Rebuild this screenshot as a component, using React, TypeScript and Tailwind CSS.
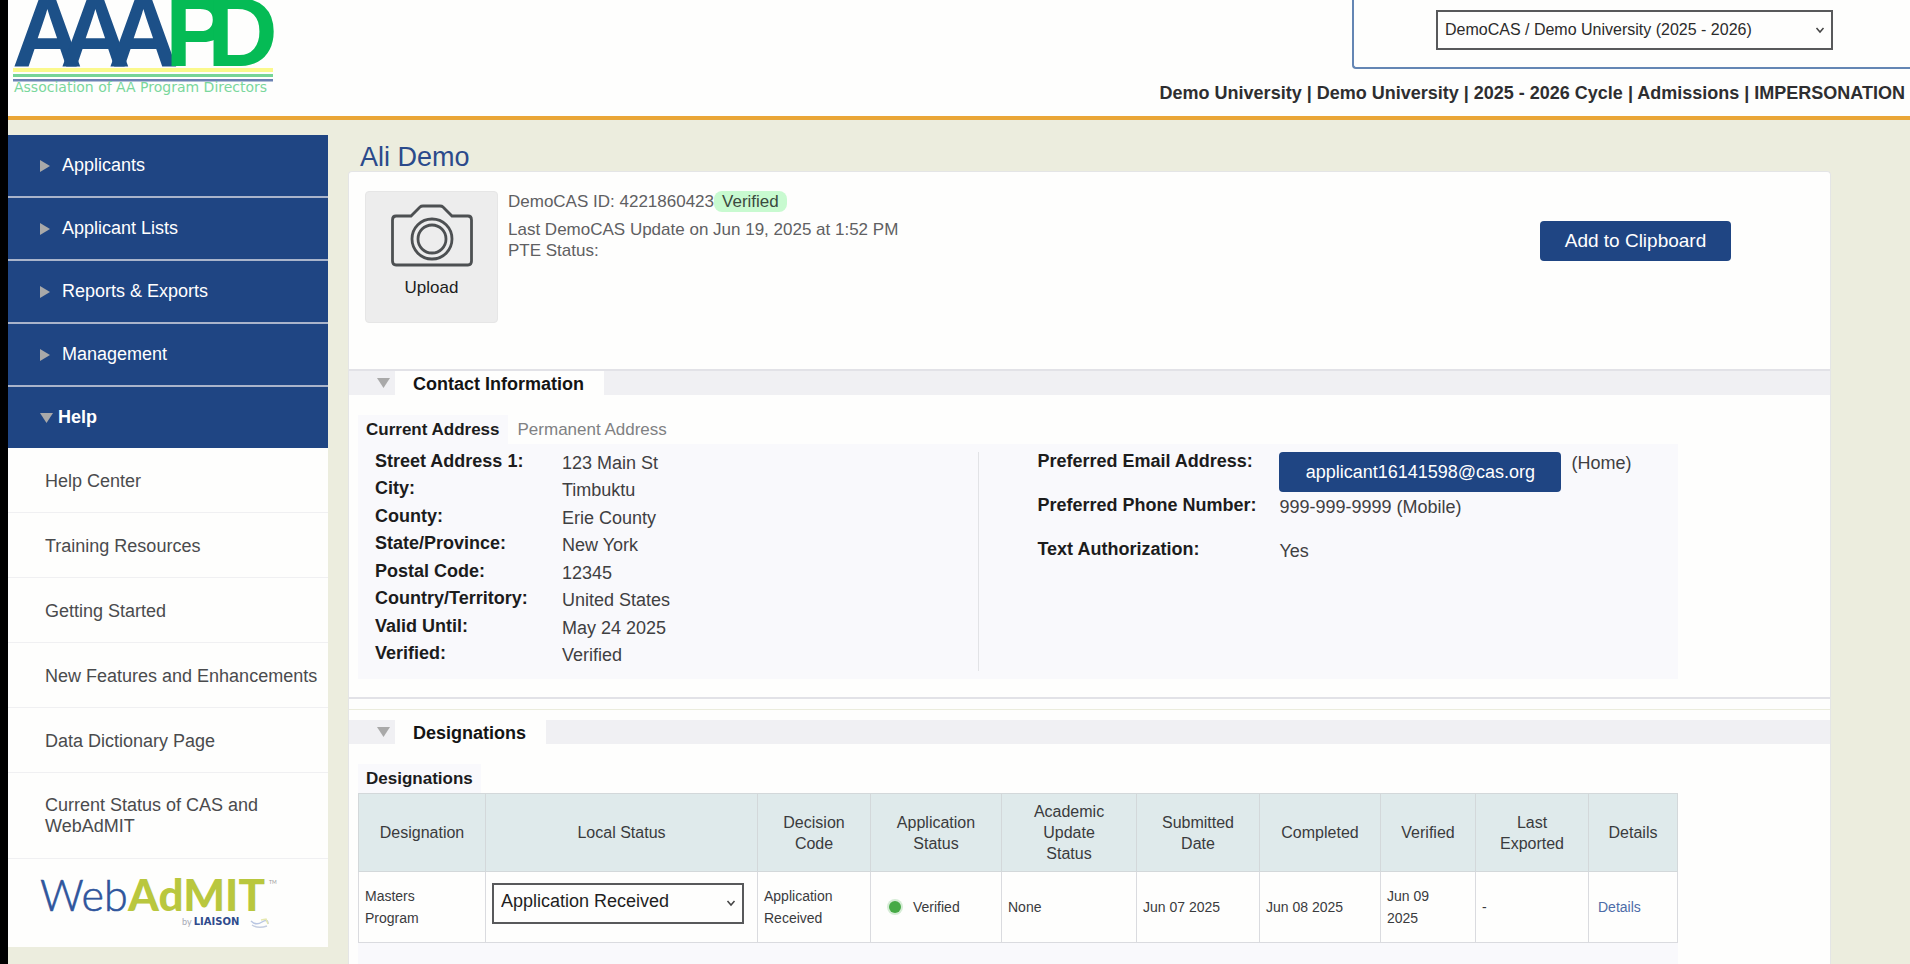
import { ReactNode } from "react";

const menu = ["Applicants", "Applicant Lists", "Reports & Exports", "Management"];

const helpLinks = [
  "Help Center",
  "Training Resources",
  "Getting Started",
  "New Features and Enhancements",
  "Data Dictionary Page",
];

const address = [
  ["Street Address 1:", "123 Main St"],
  ["City:", "Timbuktu"],
  ["County:", "Erie County"],
  ["State/Province:", "New York"],
  ["Postal Code:", "12345"],
  ["Country/Territory:", "United States"],
  ["Valid Until:", "May 24 2025"],
  ["Verified:", "Verified"],
];

const columns = [
  { name: "Designation", width: "w-[127px]" },
  { name: "Local Status", width: "w-[272px]" },
  { name: "Decision Code", width: "w-[113px]" },
  { name: "Application Status", width: "w-[131px]" },
  { name: "Academic Update Status", width: "w-[135px]" },
  { name: "Submitted Date", width: "w-[123px]" },
  { name: "Completed", width: "w-[121px]" },
  { name: "Verified", width: "w-[95px]" },
  { name: "Last Exported", width: "w-[113px]" },
  { name: "Details", width: "w-[89px]" },
];

function RightArrow() {
  return (
    <svg className="w-[10px] h-3" viewBox="0 0 10 12" fill="#a9a9a9">
      <polygon points="0,0 10,6 0,12" />
    </svg>
  );
}

function DownArrow() {
  return (
    <svg className="w-[13px] h-[10px]" viewBox="0 0 13 10" fill="#a9a9a9">
      <polygon points="0,0 13,0 6.5,10" />
    </svg>
  );
}

function Chevron() {
  return (
    <svg
      className="absolute right-2 top-1/2 w-[10px] h-2 -mt-1 pointer-events-none"
      viewBox="0 0 10 8"
      fill="none"
      stroke="#444"
      strokeWidth="1.5"
    >
      <path d="M1.5 2 L5 6 L8.5 2" />
    </svg>
  );
}

function AaapdLogo() {
  return (
    <svg className="w-[270px] h-[100px] shrink-0" viewBox="8 0 270 100" role="img" aria-label="AAAPD">
      <text y="66" fontFamily="Liberation Sans, sans-serif" fontWeight="700" fontSize="98">
        <tspan x="12 60 108" fill="#1c5088">AAA</tspan>
        <tspan x="165 207" fill="#05bb55">PD</tspan>
      </text>
      <rect x="13" y="68" width="260" height="4" fill="#fbf98c" />
      <rect x="13" y="74" width="260" height="3" fill="#76d596" />
      <rect x="13" y="79" width="260" height="2.5" fill="#6b82b3" />
      <text x="14" y="92" fontFamily="DejaVu Sans, sans-serif" fontSize="14" fill="#7ad79c">
        Association of AA Program Directors
      </text>
    </svg>
  );
}

function WebAdmitLogo() {
  return (
    <svg className="w-[240px] h-[60px]" viewBox="38 872 240 60" role="img" aria-label="WebAdMIT by Liaison">
      <text y="911" fontFamily="Lato, sans-serif">
        <tspan x="40" fontSize="43" fontWeight="300" fill="#2f559c" stroke="#2f559c" strokeWidth="0.6">Web</tspan>
        <tspan x="128" fontSize="44" fontWeight="900" fill="#b9c73e">AdMIT</tspan>
      </text>
      <text x="269" y="884" fontFamily="Lato, sans-serif" fontSize="5" fill="#999">TM</text>
      <text x="182" y="925" fontSize="9">
        <tspan fontFamily="Lato, sans-serif" fill="#a5a8b5">by </tspan>
        <tspan fontFamily="DejaVu Sans, sans-serif" fontSize="10" fontWeight="700" fill="#2f4a8c">LIAISON</tspan>
      </text>
      <path d="M251 921 Q256 926 262 922 T268 924" fill="none" stroke="#b9c6e2" strokeWidth="1.5" />
      <path d="M252 925 Q258 929 267 926" fill="none" stroke="#c4cde0" strokeWidth="1.5" />
      <path d="M261 920 L266 919 L268 924" fill="none" stroke="#e6e8b0" strokeWidth="1.5" />
    </svg>
  );
}

function Camera() {
  return (
    <svg className="w-[82px] h-[63px]" viewBox="0 0 82 63" fill="none" stroke="#4d5052" strokeWidth="2.8">
      <path d="M5 12 H20 L29 3 Q30 2 32 2 H49 Q51 2 52 3 L61 12 H77 Q80.500 12 80.500 16 V57 Q80.500 61 77 61 H5 Q1.500 61 1.500 57 V16 Q1.500 12 5 12 Z" />
      <circle cx="41" cy="35" r="20" />
      <circle cx="41" cy="35" r="14" />
    </svg>
  );
}

function SectionTitle(props: { children: ReactNode }) {
  return (
    <div className="flex h-6 bg-[#f0f0f3]">
      <button aria-label="Collapse section" className="w-[46px] pl-7 flex items-center">
        <DownArrow />
      </button>
      <h2 className="bg-[#fefefd] pl-[18px] pr-5 text-[18px] leading-[26px] font-bold text-[#141414]">
        {props.children}
      </h2>
    </div>
  );
}

function Header() {
  return (
    <header className="h-[120px] bg-[#fefefd] border-b-4 border-[#eaa636] flex justify-between">
      <AaapdLogo />
      <div className="flex flex-col items-end">
        <div className="w-[558px] h-[69px] pt-[10px] pl-[82px] border-l-2 border-b-2 border-[#6486b4] rounded-bl">
          <div className="relative w-[397px]">
            <select
              aria-label="Cycle"
              className="appearance-none w-full h-10 pl-[7px] border-2 border-[#58595b] bg-[#fefefd] text-[16px] text-[#2b2b2b]"
            >
              <option>DemoCAS / Demo University (2025 - 2026)</option>
            </select>
            <Chevron />
          </div>
        </div>
        <p className="pt-[11px] pr-[5px] text-[18px] leading-[26px] font-bold text-[#2e2e30] whitespace-nowrap">
          Demo University | Demo University | 2025 - 2026 Cycle | Admissions | IMPERSONATION
        </p>
      </div>
    </header>
  );
}

function SideNav() {
  return (
    <nav className="w-80 shrink-0 mt-[15px] mb-4 self-start bg-[#fefefd]">
      {menu.map((item) => (
        <button
          key={item}
          className="w-full h-[63px] pl-8 flex items-center gap-3 bg-[#1f4583] border-b-2 border-[#a9b4cb] text-[18px] text-white"
        >
          <RightArrow />
          {item}
        </button>
      ))}
      <button className="w-full h-[61px] pl-8 flex items-center gap-[5px] bg-[#1f4583] text-[18px] font-bold text-white">
        <DownArrow />
        Help
      </button>
      {helpLinks.map((item) => (
        <a
          key={item}
          href="#"
          className="h-[65px] pt-0.5 pl-[37px] flex items-center border-b border-[#f0f0f2] text-[18px] text-[#4a4b4d] whitespace-nowrap"
        >
          {item}
        </a>
      ))}
      <a
        href="#"
        className="h-[86px] pl-[37px] pr-16 flex items-center border-b border-[#f0f0f2] text-[18px] leading-[21px] text-[#4a4b4d]"
      >
        Current Status of CAS and WebAdMIT
      </a>
      <div className="h-[88px] pl-[30px] pt-[13px]">
        <WebAdmitLogo />
      </div>
    </nav>
  );
}

function Profile() {
  return (
    <section className="h-[197px] pt-[19px] pl-4 flex items-start">
      <button className="w-[133px] h-[132px] pt-3 flex flex-col items-center bg-[#ededed] border border-[#e6e6e6] rounded-sm text-[17px] text-[#1c1c1c]">
        <Camera />
        <span className="pt-2">Upload</span>
      </button>
      <div className="pl-[10px] text-[17px] leading-[21px] text-[#5f6062]">
        <p className="pb-[7px]">
          DemoCAS ID: 4221860423
          <span className="inline-block px-2 rounded-lg bg-[#c8fad0] text-[#3b4a40]">Verified</span>
        </p>
        <p>Last DemoCAS Update on Jun 19, 2025 at 1:52 PM</p>
        <p>PTE Status:</p>
      </div>
      <button className="ml-auto mr-[99px] mt-[30px] w-[191px] h-10 rounded-sm bg-[#1f4583] text-[19px] text-white">
        Add to Clipboard
      </button>
    </section>
  );
}

function ContactInfo() {
  return (
    <section>
      <SectionTitle>Contact Information</SectionTitle>
      <div className="pt-5 pb-[18px] pl-[9px] pr-[152px]">
        <div className="flex h-[29px] text-[17px]">
          <button className="px-2 bg-[#f9f9fc] font-bold text-[#1c1c1c]">Current Address</button>
          <button className="px-[10px] text-[#808183]">Permanent Address</button>
        </div>
        <div className="flex h-[235px] bg-[#f9f9fc] text-[18px] leading-[27px]">
          <dl className="w-[47%] pt-1 pb-3 pl-[17px] flex flex-col justify-between">
            {address.map(([label, value]) => (
              <div key={label} className="flex h-[27px]">
                <dt className="w-[187px] font-bold text-[#1c1c1c]">{label}</dt>
                <dd className="leading-[31px] text-[#3f4042]">{value}</dd>
              </div>
            ))}
          </dl>
          <div className="w-px my-2 bg-[#e2e3e6]" />
          <dl className="flex-1 pt-1 pl-[58px]">
            <div className="flex h-11">
              <dt className="w-[242px] font-bold text-[#1c1c1c]">Preferred Email Address:</dt>
              <dd className="flex items-start leading-[31px] text-[#3f4042]">
                <a
                  href="#"
                  className="mt-1 mr-[10px] w-[282px] h-10 leading-10 text-center rounded-sm bg-[#1f4583] text-white"
                >
                  applicant16141598@cas.org
                </a>
                (Home)
              </dd>
            </div>
            <div className="flex h-11">
              <dt className="w-[242px] font-bold text-[#1c1c1c]">Preferred Phone Number:</dt>
              <dd className="leading-[31px] text-[#3f4042]">999-999-9999 (Mobile)</dd>
            </div>
            <div className="flex h-11">
              <dt className="w-[242px] font-bold text-[#1c1c1c]">Text Authorization:</dt>
              <dd className="leading-[31px] text-[#3f4042]">Yes</dd>
            </div>
          </dl>
        </div>
      </div>
    </section>
  );
}

function Cell(props: { children: ReactNode }) {
  return <td className="border border-[#dadbdf] px-[6px]">{props.children}</td>;
}

function Designations() {
  return (
    <section className="flex-1 flex flex-col">
      <SectionTitle>Designations</SectionTitle>
      <div className="flex-1 flex flex-col pt-5 pl-[9px] pr-[152px]">
        <h3 className="self-start h-[29px] px-2 leading-[29px] bg-[#f9f9fc] text-[17px] font-bold text-[#1c1c1c]">
          Designations
        </h3>
        <table className="w-full table-fixed border-collapse text-[#3a3b3d]">
          <thead>
            <tr className="h-[78px] bg-[#dfeaeb] text-[16px] leading-[21px]">
              {columns.map((col) => (
                <th key={col.name} className={`${col.width} border border-[#d3d8da] px-[18px] font-normal`}>
                  {col.name}
                </th>
              ))}
            </tr>
          </thead>
          <tbody>
            <tr className="h-[71px] bg-[#fefefd] text-[14px] leading-[22px]">
              <Cell>
                <span className="block w-16">Masters Program</span>
              </Cell>
              <Cell>
                <div className="relative mr-[7px] mb-2">
                  <select
                    aria-label="Local status"
                    className="appearance-none w-full h-[41px] pl-[7px] pb-1 border-2 border-[#58595b] text-[18px] text-[#1f1f1f]"
                  >
                    <option>Application Received</option>
                  </select>
                  <Chevron />
                </div>
              </Cell>
              <Cell>Application Received</Cell>
              <Cell>
                <span className="flex items-center gap-3 pl-3">
                  <span className="w-3 h-3 rounded-full bg-[#46aa46] ring-2 ring-[#d5ecd5]" />
                  Verified
                </span>
              </Cell>
              <Cell>None</Cell>
              <Cell>Jun 07 2025</Cell>
              <Cell>Jun 08 2025</Cell>
              <Cell>
                <span className="block w-14">Jun 09 2025</span>
              </Cell>
              <Cell>-</Cell>
              <Cell>
                <a href="#" className="pl-[3px] text-[#4d6ca8]">Details</a>
              </Cell>
            </tr>
          </tbody>
        </table>
        <div className="flex-1 min-h-5 bg-[#f9f9fc]" />
      </div>
    </section>
  );
}

export default function App() {
  return (
    <div className="min-h-screen flex flex-col border-l-8 border-black bg-[#ecedde] font-['Liberation_Sans',Arial,sans-serif]">
      <Header />
      <div className="flex-1 flex">
        <SideNav />
        <main className="flex-1 flex flex-col ml-5 mr-20 pt-6">
          <h1 className="pl-3 text-[27px] leading-[27px] text-[#2b4a8b]">Ali Demo</h1>
          <div className="flex-1 flex flex-col bg-[#fefefd] border border-b-0 border-[#e4e5e6] rounded-t">
            <Profile />
            <div className="h-0.5 bg-[#e2e2e7]" />
            <ContactInfo />
            <div className="h-0.5 bg-[#e2e2e7]" />
            <div className="h-px my-[10px] bg-[#ebecdc]" />
            <Designations />
          </div>
        </main>
      </div>
    </div>
  );
}
